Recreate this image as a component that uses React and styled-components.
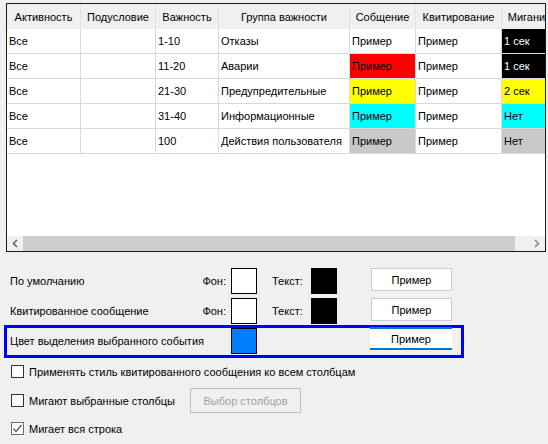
import React from "react";
import styled, { createGlobalStyle } from "styled-components";

const columns = [
  { title: "Активность", width: 74 },
  { title: "Подусловие", width: 75 },
  { title: "Важность", width: 63 },
  { title: "Группа важности", width: 131 },
  { title: "Собщение", width: 66 },
  { title: "Квитирование", width: 86 },
  { title: "Мигание", width: 56 },
];

const rows = [
  { range: "1-10", group: "Отказы", msg: "#ffffff", blink: "1 сек", blinkBg: "#000000", blinkColor: "#ffffff" },
  { range: "11-20", group: "Аварии", msg: "#ff0000", blink: "1 сек", blinkBg: "#000000", blinkColor: "#ffffff" },
  { range: "21-30", group: "Предупредительные", msg: "#ffff00", blink: "2 сек", blinkBg: "#ffff00" },
  { range: "31-40", group: "Информационные", msg: "#00ffff", blink: "Нет", blinkBg: "#00ffff" },
  { range: "100", group: "Действия пользователя", msg: "#c8c8c8", blink: "Нет", blinkBg: "#c8c8c8" },
];

const GlobalStyle = createGlobalStyle`
  html, body {
    margin: 0;
    padding: 0;
    background: #f0f0f0;
  }
  body {
    font-family: "Liberation Sans", Arial, sans-serif;
    font-size: 11px;
    color: #000;
  }
`;

const Chevron = ({ dir, color }) => (
  <svg width="8" height="9" viewBox="0 0 8 9">
    <polyline
      points={dir === "left" ? "6,1 2.5,4.5 6,8" : "2,1 5.5,4.5 2,8"}
      fill="none"
      stroke={color}
      strokeWidth="1.6"
    />
  </svg>
);

const App = () => {
  const gridCols = columns.map(c => `${c.width}px`).join(" ");
  return (
    <Page>
      <GlobalStyle />
      <TableFrame>
        <TableBody>
          <Grid style={{ gridTemplateColumns: gridCols }}>
            {columns.map(c => (
              <HeaderCell key={c.title}>{c.title}</HeaderCell>
            ))}
            {rows.map(r => (
              <React.Fragment key={r.range}>
                <Cell>Все</Cell>
                <Cell />
                <Cell>{r.range}</Cell>
                <Cell>{r.group}</Cell>
                <Cell $bg={r.msg}>Пример</Cell>
                <Cell>Пример</Cell>
                <Cell $bg={r.blinkBg} $color={r.blinkColor}>{r.blink}</Cell>
              </React.Fragment>
            ))}
          </Grid>
        </TableBody>
        <ScrollBar>
          <ScrollButton>
            <Chevron dir="left" color="#606060" />
          </ScrollButton>
          <Thumb />
          <Track />
          <ScrollButton>
            <Chevron dir="right" color="#8a8a8a" />
          </ScrollButton>
        </ScrollBar>
      </TableFrame>

      <Settings>
        <ColorRow>
          <RowLabel>По умолчанию</RowLabel>
          <Caption>Фон:</Caption>
          <Swatch $color="#ffffff" />
          <Caption $wide>Текст:</Caption>
          <Swatch $color="#000000" />
          <SampleButton>Пример</SampleButton>
        </ColorRow>
        <ColorRow>
          <RowLabel>Квитированное сообщение</RowLabel>
          <Caption>Фон:</Caption>
          <Swatch $color="#ffffff" />
          <Caption $wide>Текст:</Caption>
          <Swatch $color="#000000" />
          <SampleButton>Пример</SampleButton>
        </ColorRow>
        <SelectedBox>
          <RowLabel>Цвет выделения выбранного события</RowLabel>
          <Caption />
          <Swatch $color="#0080ff" />
          <SampleButton $focused>Пример</SampleButton>
        </SelectedBox>

        <CheckRow $top={7}>
          <Box />
          <CheckLabel>Применять стиль квитированного сообщения ко всем столбцам</CheckLabel>
        </CheckRow>
        <CheckRow $top={10}>
          <Box />
          <CheckLabel>Мигают выбранные столбцы</CheckLabel>
          <DisabledButton>Выбор столбцов</DisabledButton>
        </CheckRow>
        <CheckRow $top={9}>
          <Box $checked>
            <svg width="11" height="11" viewBox="0 0 11 11">
              <polyline points="1.5,5.5 4,8.5 9.5,2" fill="none" stroke="#555" strokeWidth="1.2" />
            </svg>
          </Box>
          <CheckLabel>Мигает вся строка</CheckLabel>
        </CheckRow>
      </Settings>
    </Page>
  );
};

export default App;

const Page = styled.div`
  width: 548px;
  height: 444px;
  overflow: hidden;
  background: #f0f0f0;
`;

const TableFrame = styled.div`
  margin: 3px 0 0 6px;
  width: 540px;
  height: 249px;
  box-sizing: border-box;
  border: 1px solid #1a1a1a;
  background: #ffffff;
  display: flex;
  flex-direction: column;
  overflow: hidden;
`;

const TableBody = styled.div`
  flex: 1;
  overflow: hidden;
`;

const Grid = styled.div`
  display: grid;
  width: max-content;
`;

const HeaderCell = styled.div`
  height: 25px;
  box-sizing: border-box;
  background: #f0f0f0;
  border-right: 1px solid #e2e2e2;
  display: flex;
  align-items: center;
  justify-content: center;
  white-space: nowrap;
  overflow: hidden;
`;

const Cell = styled.div`
  height: 25px;
  box-sizing: border-box;
  border-right: 1px solid #d9d9d9;
  border-bottom: 1px solid #d9d9d9;
  padding-left: 2px;
  background: ${p => p.$bg || "#ffffff"};
  color: ${p => p.$color || "#000000"};
  display: flex;
  align-items: center;
  white-space: nowrap;
  overflow: hidden;
`;

const ScrollBar = styled.div`
  height: 15px;
  display: flex;
  background: #f0f0f0;
`;

const ScrollButton = styled.div`
  width: 16px;
  display: flex;
  align-items: center;
  justify-content: center;
`;

const Thumb = styled.div`
  width: 492px;
  background: #cdcdcd;
`;

const Track = styled.div`
  flex: 1;
`;

const Settings = styled.div`
  display: flex;
  flex-direction: column;
  padding-top: 16px;
`;

const ColorRow = styled.div`
  display: grid;
  grid-template-columns: 191px 30px 26px 54px 26px 34px 81px;
  align-items: center;
  height: 26px;
  padding-left: 10px;
  margin-bottom: 4px;
`;

const SelectedBox = styled(ColorRow)`
  grid-template-columns: 191px 30px 26px 54px 26px 33px 82px;
  width: 460px;
  height: 33px;
  box-sizing: border-box;
  margin: -3px 0 0 4px;
  padding: 0 0 1px 3px;
  border: 3px solid #0000ff;
`;

const RowLabel = styled.span`
  white-space: nowrap;
`;

const Caption = styled.span`
  text-align: ${p => (p.$wide ? "left" : "right")};
  padding-right: ${p => (p.$wide ? "0" : "5px")};
  padding-left: ${p => (p.$wide ? "15px" : "0")};
`;

const Swatch = styled.div`
  width: 26px;
  height: 26px;
  box-sizing: border-box;
  border: 1px solid #000000;
  background: ${p => p.$color};
`;

const SampleButton = styled.div`
  grid-column: 7;
  height: 23px;
  align-self: start;
  box-sizing: border-box;
  background: #ffffff;
  border: 1px solid #cccccc;
  display: flex;
  align-items: center;
  justify-content: center;
  ${p =>
    p.$focused &&
    `
    border: none;
    border-top: 2px solid #0078d7;
    border-bottom: 2px solid #0078d7;
    margin-top: -1px;
  `}
`;

const CheckRow = styled.div`
  display: flex;
  align-items: center;
  padding-left: 11px;
  margin-top: ${p => p.$top}px;
  white-space: nowrap;
`;

const Box = styled.div`
  width: 13px;
  height: 13px;
  box-sizing: border-box;
  border: 1px solid ${p => (p.$checked ? "#6d6d6d" : "#333333")};
  background: #ffffff;
  display: flex;
  align-items: center;
  justify-content: center;
  flex-shrink: 0;
`;

const CheckLabel = styled.span`
  margin-left: 5px;
`;

const DisabledButton = styled.div`
  width: 111px;
  height: 25px;
  box-sizing: border-box;
  margin-left: 15px;
  border: 1px solid #bfbfbf;
  background: #f0f0f0;
  color: #a0a0a0;
  display: flex;
  align-items: center;
  justify-content: center;
`;
